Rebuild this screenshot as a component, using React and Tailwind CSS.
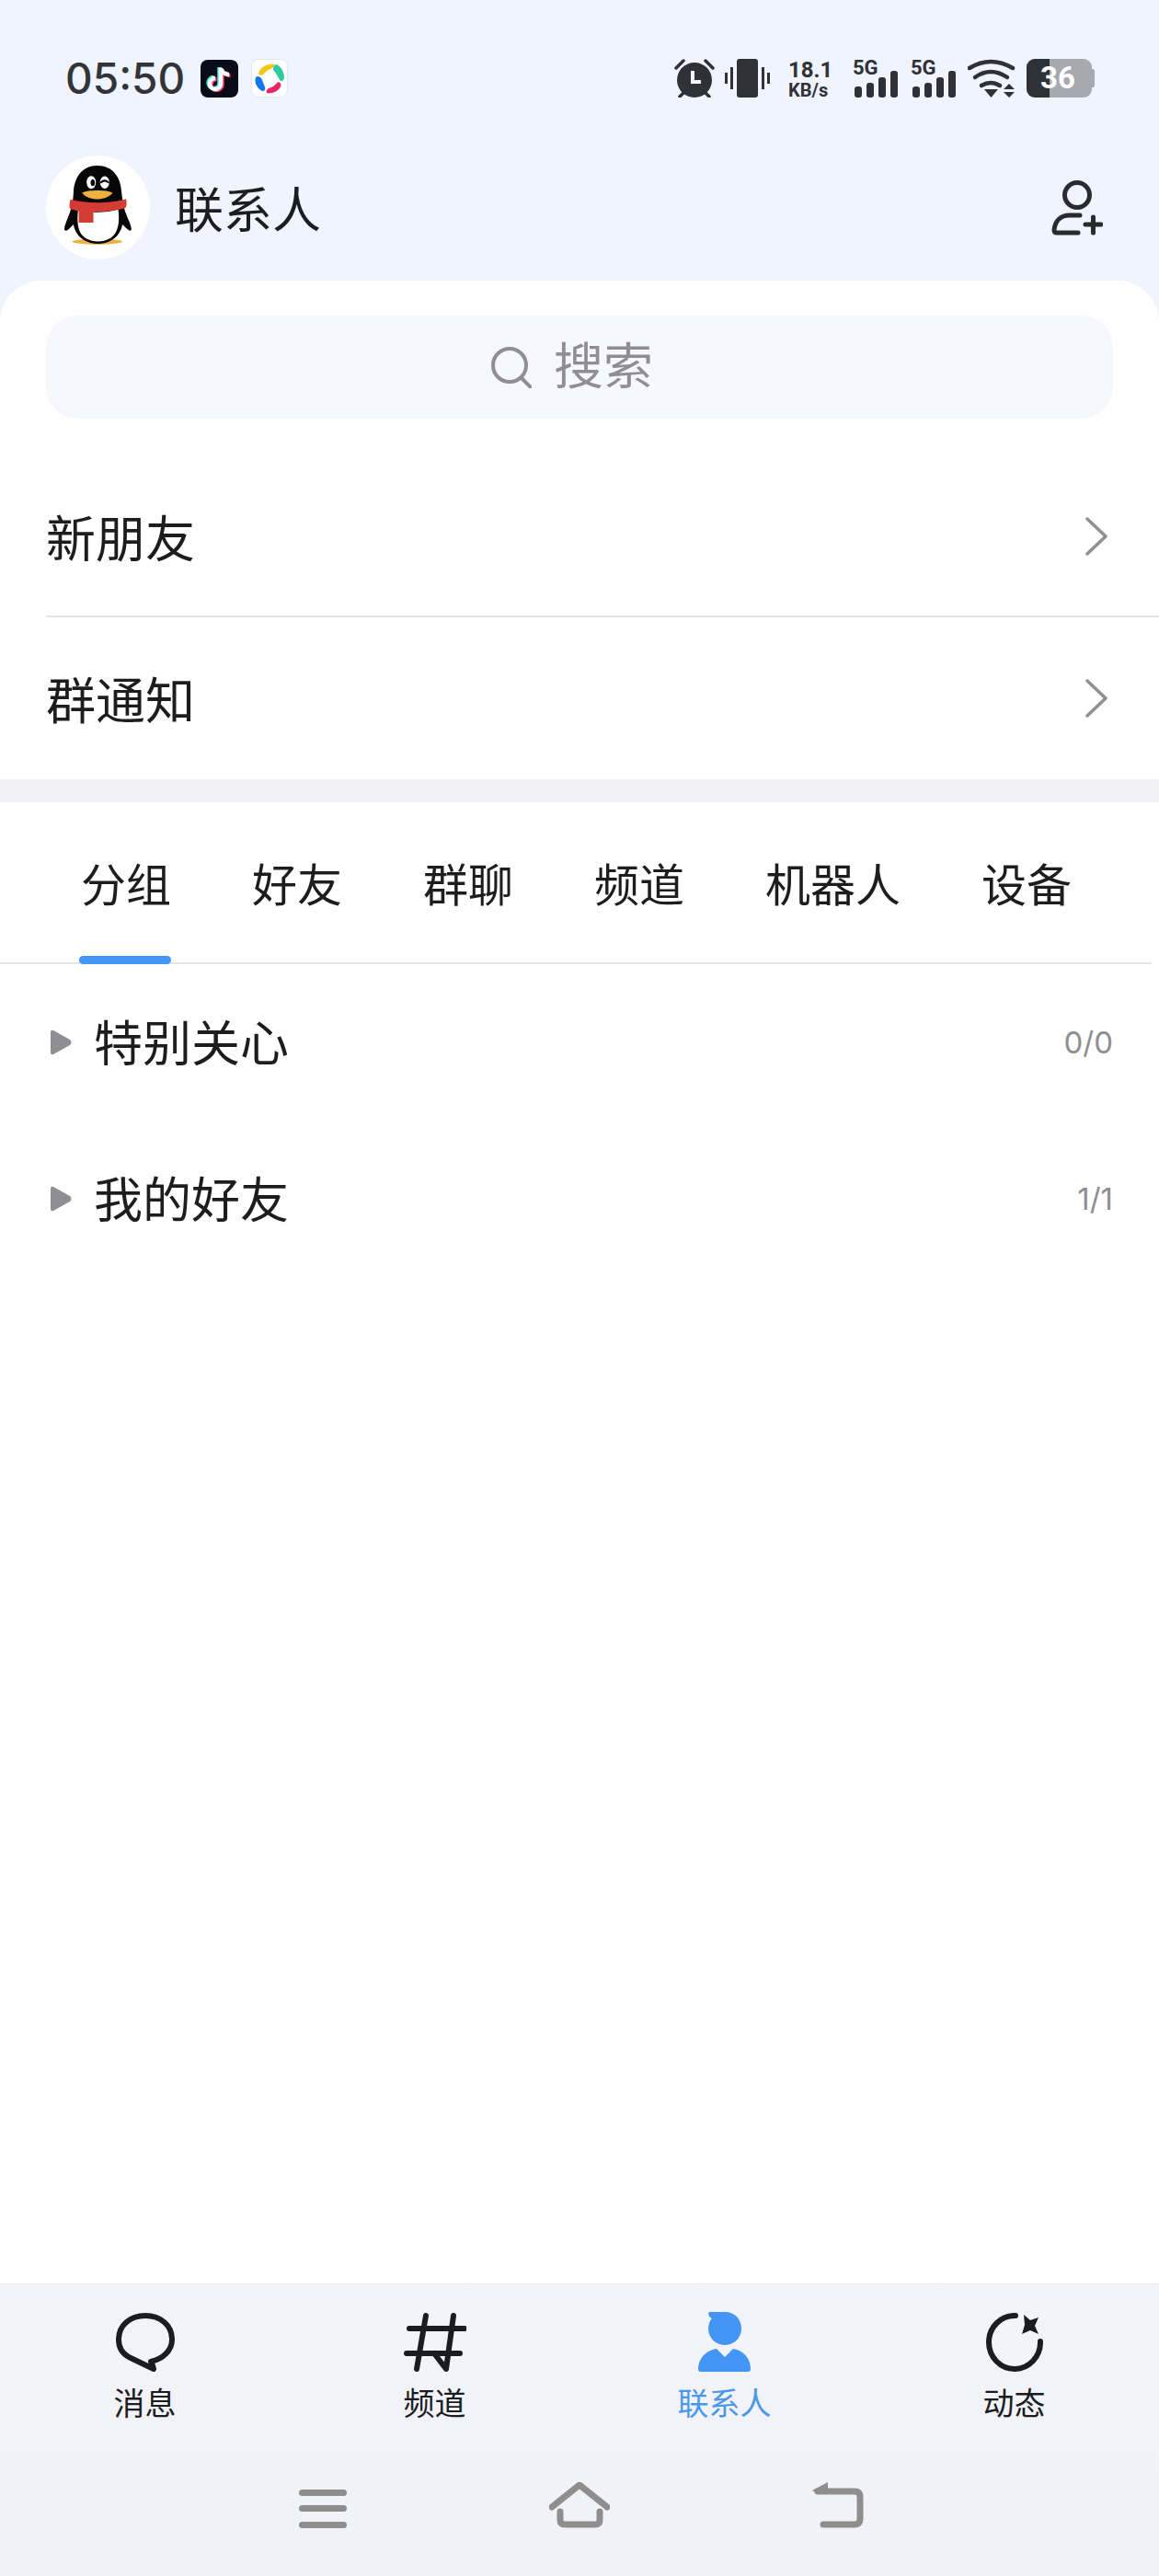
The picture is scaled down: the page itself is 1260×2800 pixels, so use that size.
const cjk = 'font-["Noto_Sans_CJK_SC","Noto_Sans",sans-serif]'
const tabs = ['分组', '好友', '群聊', '频道', '机器人', '设备']
const groups = [
    { name: '特别关心', count: '0/0' },
    { name: '我的好友', count: '1/1' },
]

function Penguin() {
    return (
        <svg viewBox="0 0 340 340" className="w-[113px] h-[113px]">
            <ellipse cx="168" cy="282" rx="82" ry="9" fill="#eeb03f" />
            <path d="M168 33C118 33 92 72 90 120C89 135 88 150 84 165C78 195 62 220 60 240C60 246 66 248 72 243C78 238 84 232 90 226C95 262 128 289 170 289C212 289 244 262 250 226C256 232 264 240 270 244C276 248 280 244 279 238C276 218 260 195 254 165C250 145 248 130 247 118C244 70 218 33 168 33Z" fill="#070707" />
            <path d="M105 180C140 188 200 188 236 176C240 200 240 230 228 252C216 272 194 281 170 281C146 281 124 272 112 252C102 232 102 205 105 180Z" fill="#fff" />
            <path d="M80 144C130 158 210 158 262 142C264 152 266 168 258 172C230 180 190 184 155 184L155 220L107 220L107 182C98 180 88 178 78 174C76 166 77 154 80 144Z" fill="#d33b33" />
            <ellipse cx="148" cy="88" rx="15" ry="21" fill="#fff" />
            <ellipse cx="153" cy="89" rx="7" ry="11" fill="#070707" />
            <ellipse cx="192" cy="88" rx="15" ry="20" fill="#fff" />
            <path d="M180 88C188 80 196 81 204 88" stroke="#070707" strokeWidth="6" fill="none" strokeLinecap="round" />
            <path d="M118 122C135 112 200 112 218 122C205 140 180 143 168 143C155 143 130 140 118 122Z" fill="#eeb03f" />
        </svg>
    )
}

function TikTokIcon() {
    const note = 'M22 9V26A6 6 0 1 1 16 20M22 9C22.500 13 26 16 31 16'
    return (
        <svg viewBox="0 0 41 41" className="w-[41px] h-[41px]">
            <rect width="41" height="41" rx="8" fill="#0b0b17" />
            <path d={note} transform="translate(-1.500 -1)" fill="none" stroke="#4fe3e0" strokeWidth="4.500" />
            <path d={note} transform="translate(1.500 1)" fill="none" stroke="#f6476c" strokeWidth="4.500" />
            <path d={note} fill="none" stroke="#fff" strokeWidth="4.500" />
        </svg>
    )
}

function PetalIcon() {
    return (
        <svg viewBox="0 0 40 42" className="w-[40px] h-[42px]">
            <rect x="0.500" y="0.500" width="39" height="41" rx="8" fill="#fff" stroke="#e3e6ee" />
            <path d="M8 16C10 9 17 5 25 6C26 8 24 10 21 11C17 12 15 15 13 17C11 18 9 18 8 16Z" fill="#f9c513" />
            <path d="M28 6C33 9 36 14 36 21C35 24 33 25 31 23C29 19 27 15 24 12C24 9 25 6 28 6Z" fill="#2fcb9f" />
            <path d="M32 27C33 29 32 31 30 33C26 37 21 38 17 37C16 35 17 33 19 32C23 31 26 29 28 26C29 25 31 25 32 27Z" fill="#ef2263" />
            <path d="M5 20C7 18 9 19 11 21C13 25 14 28 15 31C16 34 14 35 12 35C7 32 3 27 5 20Z" fill="#1476e8" />
        </svg>
    )
}

function AlarmIcon() {
    return (
        <svg viewBox="0 0 44 42" className="w-[44px] h-[42px]">
            <circle cx="22" cy="23" r="19" fill="#303136" />
            <path d="M20 13V25H29" fill="none" stroke="#eff4fe" strokeWidth="4" />
            <path d="M2 10L10 2M42 10L34 2M6 41L11 36M38 41L33 36" stroke="#303136" strokeWidth="3.500" strokeLinecap="round" />
        </svg>
    )
}

function VibrateIcon() {
    return (
        <svg viewBox="0 0 49 42" className="w-[49px] h-[42px]" fill="#303136">
            <rect x="13" y="0" width="23" height="42" rx="3" />
            <rect x="0" y="15" width="3" height="12" />
            <rect x="6" y="9" width="3" height="24" />
            <rect x="40" y="9" width="3" height="24" />
            <rect x="46" y="15" width="3" height="12" />
        </svg>
    )
}

function SignalIcon() {
    return (
        <div className="relative w-[49px] h-[42px]">
            <span className="absolute left-0 top-[-3px] font-['Roboto',sans-serif] font-bold text-[22px] leading-[26px] text-[#303136]">5G</span>
            <svg viewBox="0 0 49 42" className="w-[49px] h-[42px]" fill="#303136">
                <rect x="2" y="30" width="8" height="12" rx="3" />
                <rect x="15" y="26" width="8" height="16" rx="3" />
                <rect x="28" y="20" width="8" height="22" rx="3" />
                <rect x="41" y="13" width="8" height="29" rx="3" />
            </svg>
        </div>
    )
}

function WifiIcon() {
    return (
        <svg viewBox="0 0 53 42" className="w-[53px] h-[42px]">
            <g fill="none" stroke="#303136" strokeWidth="4.500" strokeLinecap="round">
                <path d="M2 10Q25 -4 49 10" />
                <path d="M8 20Q25 8 43 20" />
                <path d="M15 29Q25 23 35 29" />
            </g>
            <path d="M18 33H33L25.500 42ZM39 33L45 27L51 33ZM39 36H51L45 42Z" fill="#303136" />
        </svg>
    )
}

function BatteryIcon() {
    return (
        <div className="relative flex items-center w-[74px] h-[42px]">
            <div className="w-[71px] h-[42px] rounded-[9px] overflow-hidden bg-[#a6a9b0]">
                <div className="w-[25px] h-full bg-[#303136]" />
            </div>
            <div className="w-[3px] h-[20px] rounded-r-[2px] bg-[#a6a9b0]" />
            <span className="absolute left-[15px] top-0 font-['Roboto',sans-serif] font-bold text-[33px] leading-[42px] text-white">36</span>
        </div>
    )
}

function AddFriendIcon() {
    return (
        <svg viewBox="0 0 56 60" className="w-[56px] h-[60px]" fill="none" stroke="#2a2b2e" strokeWidth="5" strokeLinecap="round" strokeLinejoin="round">
            <circle cx="28" cy="16" r="13.500" />
            <path d="M31 38H20C10 38 4 44 3 54C3 56 4 57 6 57H29" />
            <path d="M37 48H54M45.500 40V57" />
        </svg>
    )
}

function Chevron() {
    return (
        <svg viewBox="0 0 24 42" className="w-[24px] h-[42px]" fill="none" stroke="#8e8e93" strokeWidth="3.500" strokeLinecap="round" strokeLinejoin="round">
            <path d="M2 2L22 21L2 40" />
        </svg>
    )
}

function MessageIcon() {
    return (
        <svg viewBox="0 0 64 64" className="w-[64px] h-[64px]" fill="none" stroke="#1b1c1e" strokeWidth="6" strokeLinecap="round" strokeLinejoin="round">
            <path d="M38 53C51 50 61 41 61 29C61 13 48 3 32 3C16 3 3 13 3 29C3 37 7 44 14 48L41 61L39 54" />
        </svg>
    )
}

function HashIcon() {
    return (
        <svg viewBox="0 0 68 64" className="w-[68px] h-[64px]" fill="none" stroke="#1b1c1e" strokeWidth="6" strokeLinecap="round" strokeLinejoin="round">
            <path d="M24 3L14 61M54 3L46 61L33 44M6 17H66M3 44H61" />
        </svg>
    )
}

function PersonIcon() {
    return (
        <svg viewBox="0 0 57 65" className="w-[57px] h-[65px]" fill="#4396f5">
            <path d="M12 0H29C40 0 47 8 47 18C47 28 39 36 29 36C19 36 11 28 11 18C11 13 13 9 15 7C12 6 10 2 12 0Z" />
            <path d="M0 62C0 51 8 42 20 40L29 49L38 40C50 42 57 51 57 62Q57 65 54 65H3Q0 65 0 62Z" />
        </svg>
    )
}

function MomentIcon() {
    return (
        <svg viewBox="0 0 62 64" className="w-[62px] h-[64px]">
            <path d="M32 3A28 29 0 1 0 59 31" fill="none" stroke="#1b1c1e" strokeWidth="6" strokeLinecap="round" />
            <path d="M41 2L48 8L57 5L53 14L57 23L48 19L39 23L42 13Z" fill="#1b1c1e" />
        </svg>
    )
}

function NavTab({ icon, label, active }) {
    return (
        <div className={`flex flex-col items-center ${active ? 'text-[#4a98e8]' : 'text-[#1b1c1e]'}`}>
            <div className="h-[65px] flex items-center">{icon}</div>
            <span className={`${cjk} mt-[13px] text-[34px] leading-[40px]`}>{label}</span>
        </div>
    )
}

export default function App() {
    return (
        <div className={`w-[1260px] h-[2800px] flex flex-col bg-[#eff4fe] overflow-hidden ${cjk}`}>
            {/* status bar */}
            <div className="flex justify-between pt-[64px] pl-[71px] pr-[70px] h-[169px]">
                <div className="flex items-center h-[42px]">
                    <span className="w-[127px] whitespace-nowrap font-['Inter',sans-serif] font-medium text-[46px] leading-none text-[#333438]">05:50</span>
                    <div className="ml-[20px]"><TikTokIcon /></div>
                    <div className="ml-[14px]"><PetalIcon /></div>
                </div>
                <div className="flex items-start h-[42px]">
                    <AlarmIcon />
                    <div className="ml-[11px]"><VibrateIcon /></div>
                    <div className="ml-[20px] w-[50px] flex flex-col font-['Roboto',sans-serif] font-bold text-[#303136]">
                        <span className="text-[24px] leading-[24px]">18.1</span>
                        <span className="text-[20px] leading-[20px] whitespace-nowrap">KB/s</span>
                    </div>
                    <div className="ml-[20px]"><SignalIcon /></div>
                    <div className="ml-[14px]"><SignalIcon /></div>
                    <div className="ml-[13px]"><WifiIcon /></div>
                    <div className="ml-[11px]"><BatteryIcon /></div>
                </div>
            </div>

            {/* header */}
            <div className="flex items-center justify-between h-[113px] pl-[50px] pr-[61px]">
                <div className="flex items-center gap-[27px]">
                    <div className="w-[113px] h-[113px] rounded-full bg-white overflow-hidden">
                        <Penguin />
                    </div>
                    <span className="text-[53px] leading-none text-[#1c1d1f]">联系人</span>
                </div>
                <AddFriendIcon />
            </div>

            {/* content card */}
            <div className="mt-[23px] flex-1 flex flex-col bg-white rounded-t-[45px]">
                <div className="pt-[38px] px-[50px]">
                    <div className="h-[112px] rounded-[34px] bg-[#f7f8fd] flex items-center justify-center gap-[24px] pr-[16px]">
                        <svg viewBox="0 0 44 45" className="w-[44px] h-[45px]" fill="none" stroke="#8e8e93" strokeWidth="4" strokeLinecap="round">
                            <circle cx="20" cy="20" r="18" />
                            <path d="M33 34L43 44" />
                        </svg>
                        <span className="pb-[9px] text-[54px] leading-none text-[#8e8e93]">搜索</span>
                    </div>
                </div>

                <div className="mt-[41px] pl-[50px]">
                    <div className="h-[175px] flex items-center justify-between pr-[56px] border-b-2 border-[#e5e5e7]">
                        <span className="text-[54px] leading-none text-[#1c1d1f]">新朋友</span>
                        <Chevron />
                    </div>
                    <div className="h-[176px] flex items-center justify-between pr-[56px]">
                        <span className="text-[54px] leading-none text-[#1c1d1f]">群通知</span>
                        <Chevron />
                    </div>
                </div>

                <div className="h-[25px] bg-[#f2f2f6]" />

                {/* tabs */}
                <div className="h-[176px] w-[1252px] flex items-center gap-[88px] pl-[88px] border-b-2 border-[#e5e5e7]">
                    {tabs.map((tab, index) => (
                        <div key={tab} className="relative">
                            <span className="text-[49px] leading-none text-[#1c1d1f]">{tab}</span>
                            {index === 0 && (
                                <div className="absolute left-[-2px] right-0 top-[105px] h-[9px] rounded-full bg-[#4396f5]" />
                            )}
                        </div>
                    ))}
                </div>

                {/* groups */}
                <div className="-mt-[2px]">
                    {groups.map(group => (
                        <div key={group.name} className="h-[170px] flex items-center pl-[55px] pr-[50px]">
                            <svg viewBox="0 0 23 28" className="mt-[3px] w-[23px] h-[28px]" fill="#8e8e93">
                                <path d="M0 3Q0 0 3 1L21 11Q24 14 21 17L3 27Q0 28 0 25Z" />
                            </svg>
                            <span className="ml-[24px] text-[53px] leading-none text-[#1c1d1f]">{group.name}</span>
                            <span className="ml-auto pt-[4px] font-['Inter',sans-serif] text-[33px] leading-none text-[#8e8e93]">{group.count}</span>
                        </div>
                    ))}
                </div>

                {/* bottom nav */}
                <div className="mt-auto h-[318px] border-t border-[#e9e9ef] bg-gradient-to-b from-[#f3f4f9] to-[#f0f2f8]">
                    <div className="grid grid-cols-4 pt-[30px]">
                        <NavTab icon={<MessageIcon />} label="消息" />
                        <NavTab icon={<HashIcon />} label="频道" />
                        <NavTab icon={<PersonIcon />} label="联系人" active />
                        <NavTab icon={<MomentIcon />} label="动态" />
                    </div>
                    <div className="mt-[67px] flex justify-center items-end gap-[220px] pl-[4px]">
                        <svg viewBox="0 0 52 42" className="w-[52px] h-[42px]" fill="#8e8e8e">
                            <rect y="0" width="52" height="7" rx="3.500" />
                            <rect y="17" width="52" height="7" rx="3.500" />
                            <rect y="35" width="52" height="7" rx="3.500" />
                        </svg>
                        <svg viewBox="0 0 66 50" className="w-[66px] h-[50px]" fill="none" stroke="#8e8e8e" strokeWidth="7" strokeLinecap="round" strokeLinejoin="round">
                            <path d="M3 27L33 3L63 27" />
                            <path d="M12 32V41Q12 46 17 46H50Q55 46 55 41V32" />
                        </svg>
                        <svg viewBox="0 0 56 50" className="w-[56px] h-[50px]">
                            <path d="M0 9L17 0V13H6Z" fill="#8e8e8e" />
                            <path d="M6 10H46Q52 10 52 16V40Q52 46 46 46H12" fill="none" stroke="#8e8e8e" strokeWidth="7" strokeLinecap="round" />
                        </svg>
                    </div>
                </div>
            </div>
        </div>
    )
}
